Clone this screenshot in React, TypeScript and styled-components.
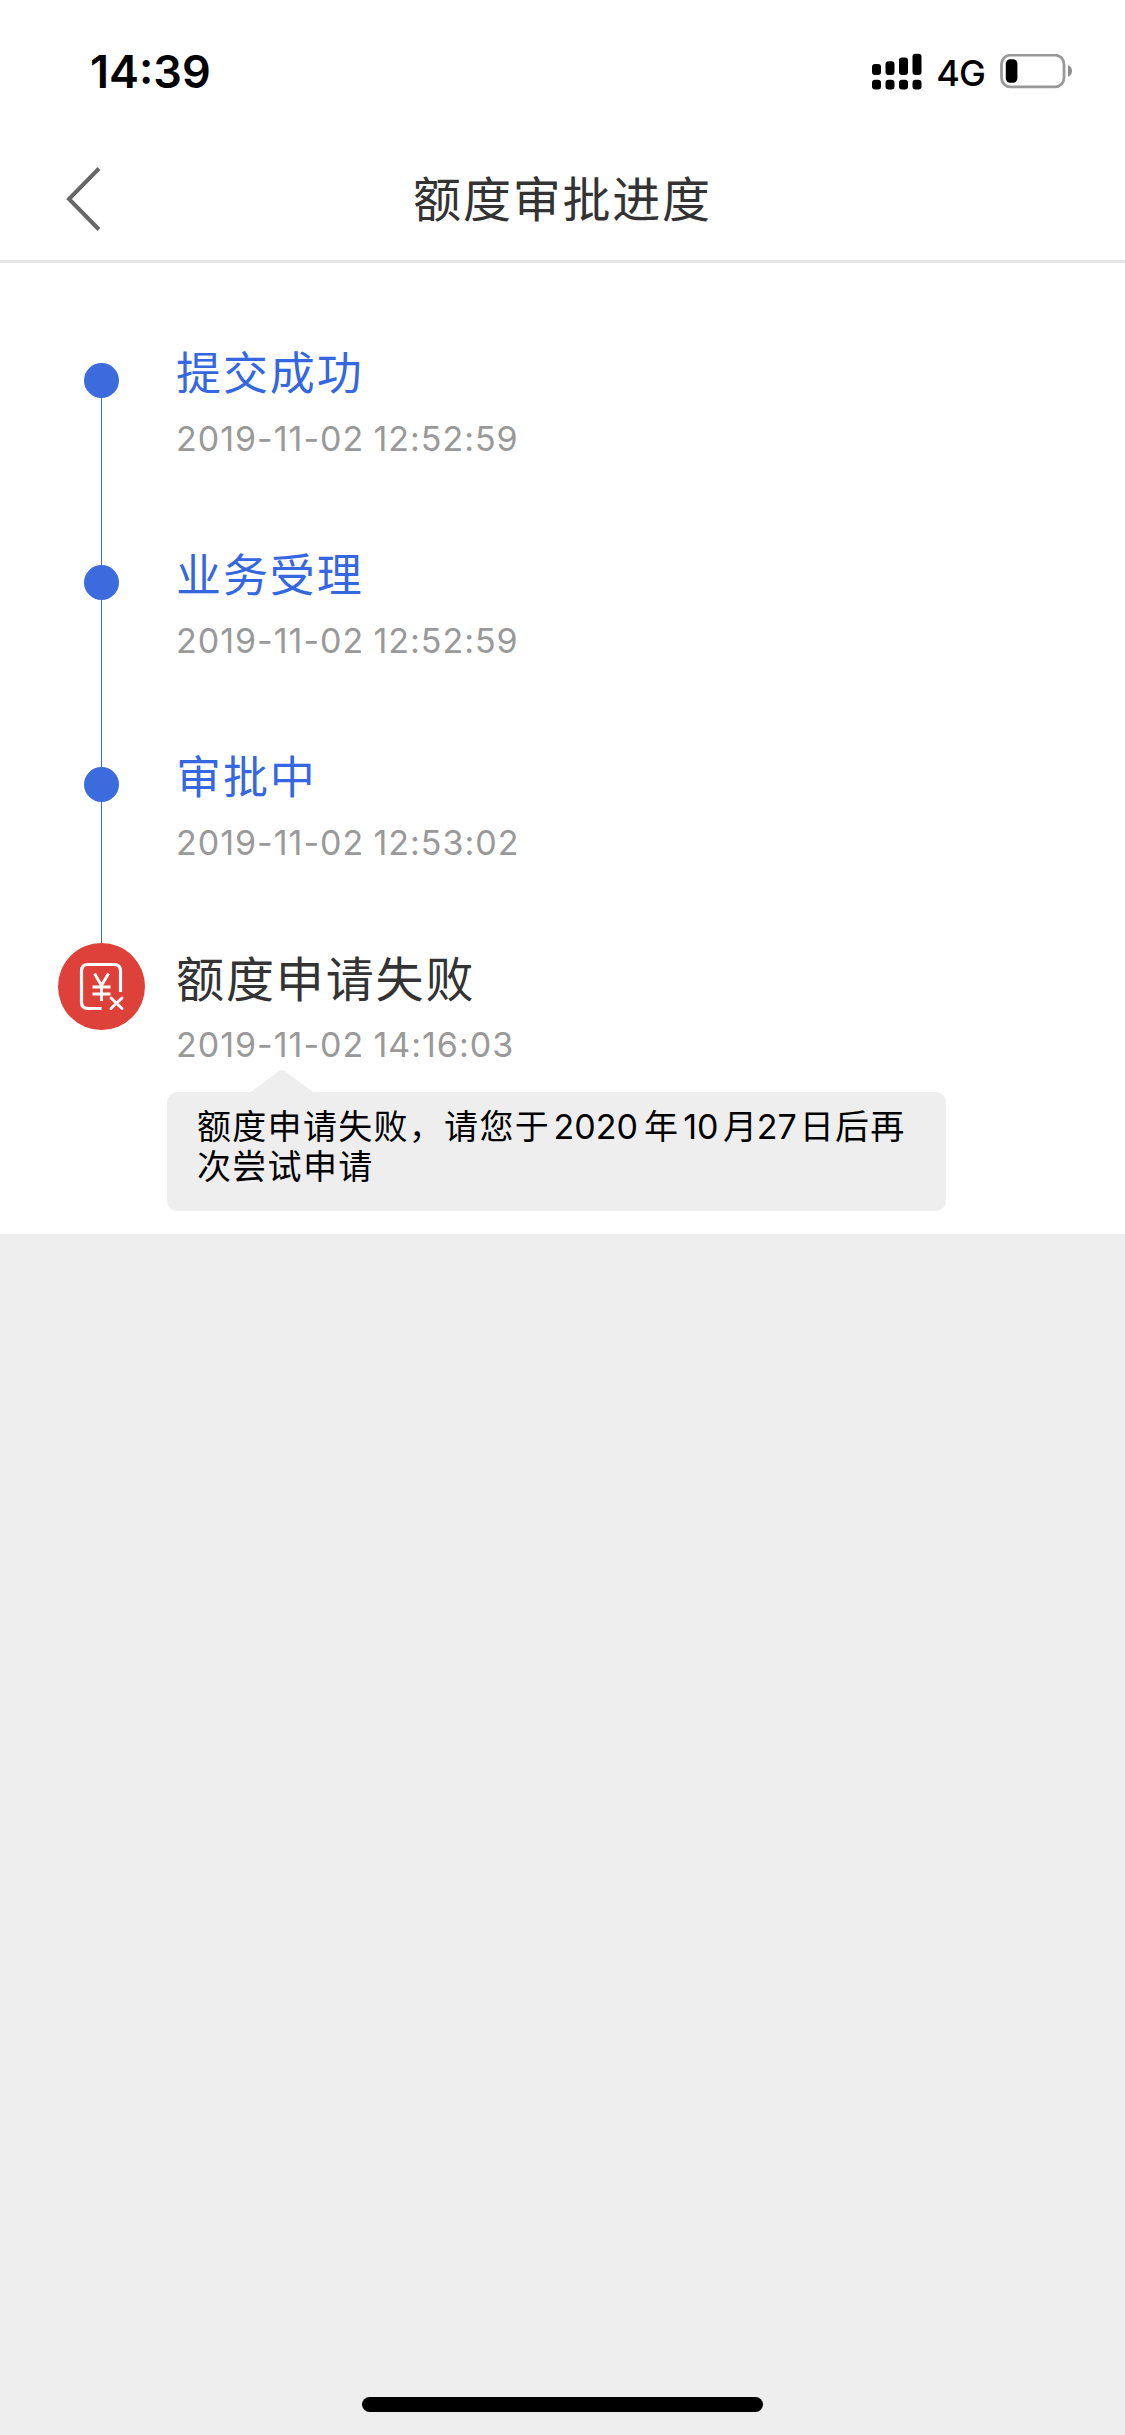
import React from "react";
import styled, { createGlobalStyle } from "styled-components";

const GlobalStyle = createGlobalStyle`
  * { box-sizing: border-box; }
  body { margin: 0; background: #eee; }
`;

const Screen = styled.div`
  display: flex;
  flex-direction: column;
  width: 1125px;
  height: 2435px;
  background: #eee;
  font-family: Inter, "Noto Sans CJK SC", sans-serif;
  overflow: hidden;
`;

const StatusBar = styled.header`
  display: flex;
  align-items: center;
  justify-content: space-between;
  height: 132px;
  padding: 12px 52px 0 90px;
  background: #fff;
  color: #000;
`;

const Clock = styled.span`
  font-size: 45px;
  line-height: 54px;
  font-weight: 600;
`;

const Indicators = styled.div`
  display: flex;
  align-items: center;
`;

const Network = styled.span`
  margin: 1px 15px 0 14px;
  font-size: 36px;
  line-height: 42px;
  font-weight: 500;
  letter-spacing: -0.9px;
`;

const NavBar = styled.nav`
  display: grid;
  grid-template-columns: 110px 1fr 110px;
  align-items: center;
  height: 131px;
  padding-top: 3px;
  background: #fff;
  border-bottom: 3px solid #e5e5e5;
`;

const BackButton = styled.button`
  display: flex;
  padding: 2px 0 0 64px;
  border: 0;
  background: none;
`;

const Title = styled.h1`
  margin: 0;
  padding: 4px 0 0 0;
  color: #333;
  font-size: 48px;
  line-height: 60px;
  font-weight: 400;
  letter-spacing: 1.8px;
  text-align: center;
`;

const Panel = styled.main`
  height: 971px;
  padding: 74px 0 0 57px;
  background: #fff;
`;

const Steps = styled.ol`
  margin: 0;
  padding: 0;
  list-style: none;
`;

const Step = styled.li`
  display: grid;
  grid-template-columns: 89px 1fr;
  column-gap: 30px;
  height: 202px;
`;

const Rail = styled.div`
  display: flex;
  flex-direction: column;
  align-items: center;
`;

const Connector = styled.i<{ $hidden?: boolean; $grow?: boolean }>`
  width: 1px;
  height: 26px;
  flex: ${(p) => (p.$grow ? "1" : "0 0 26px")};
  background: ${(p) => (p.$hidden ? "transparent" : "#3b6bdb")};
`;

const Dot = styled.i`
  flex: none;
  width: 35px;
  height: 35px;
  border-radius: 50%;
  background: #3b6bdd;
`;

const Failure = styled.div`
  display: flex;
  flex: none;
  width: 87px;
  height: 87px;
  border-radius: 50%;
  background: #dd4139;
`;

const Body = styled.div`
  padding-top: 4.5px;
`;

const StepName = styled.h2<{ $failed?: boolean }>`
  margin: 0;
  color: ${(p) => (p.$failed ? "#333" : "#3567e0")};
  font-size: ${(p) => (p.$failed ? 48 : 45)}px;
  font-weight: 400;
  line-height: 64px;
  letter-spacing: 1.9px;
`;

const Time = styled.time`
  display: block;
  margin-top: 12.5px;
  color: #999;
  font-size: 34px;
  line-height: 42px;
  letter-spacing: 1px;
  word-spacing: -1.4px;
`;

const Pointer = styled.svg`
  display: block;
  margin: 3px 0 0 75px;
`;

const Bubble = styled.div`
  width: 779px;
  height: 119px;
  margin-left: -9px;
  padding: 15px 30px;
  border-radius: 10px;
  background: #eee;
  color: #000;
  font-size: 34px;
  line-height: 40px;
  letter-spacing: 1.3px;
`;

const Line = styled.div`
  white-space: nowrap;
`;

const Num = styled.span<{ $before: number; $after: number }>`
  margin: 0 ${(p) => p.$after}px 0 ${(p) => p.$before}px;
  letter-spacing: 0;
`;

const HomeArea = styled.footer`
  display: flex;
  justify-content: center;
  margin-top: auto;
  padding-bottom: 23px;
`;

const HomeIndicator = styled.i`
  width: 401px;
  height: 15px;
  border-radius: 8px;
  background: #000;
`;

const steps = [
  { name: "提交成功", time: "2019-11-02 12:52:59" },
  { name: "业务受理", time: "2019-11-02 12:52:59" },
  { name: "审批中", time: "2019-11-02 12:53:02" },
];

const SignalIcon = () => (
  <svg width="50" height="38" viewBox="0 0 50 38">
    <rect x="0" y="11" width="9" height="11" rx="3" />
    <rect x="13.5" y="8.3" width="9" height="13.7" rx="3" />
    <rect x="27" y="4.6" width="9" height="17.4" rx="3" />
    <rect x="40.5" y="0.8" width="9" height="21.2" rx="3" />
    {[0, 13.5, 27, 40.5].map((x) => (
      <rect key={x} x={x} y="26.8" width="9" height="9.6" rx="3.2" />
    ))}
  </svg>
);

const BatteryIcon = () => (
  <svg width="73" height="36" viewBox="0 0 73 36">
    <rect x="1.5" y="1.2" width="62.5" height="31.6" rx="9" fill="none" stroke="#999" strokeWidth="2.8" />
    <rect x="5.8" y="5.2" width="11.6" height="23.6" rx="4.5" />
    <path d="M68 11.3 Q72 13 72 17 Q72 21 68 22.7Z" fill="#8c8c8c" />
  </svg>
);

const FailureIcon = () => (
  <svg width="87" height="87" viewBox="0 0 87 87" fill="none" stroke="#fff" strokeWidth="3.2">
    <path d="M62.500 49V28q0-6.500-6.500-6.500H30q-6.500 0-6.500 6.500V59q0 6.500 6.500 6.500H43.500" />
    <path d="M36.500 30.500 43.500 42.500 50.500 30.500M43.500 42.500V58M34.500 44H52.500M34.500 51H52.500" strokeWidth="2.900" />
    <path d="M53 55 64 65.500M64 55 53 65.500" strokeLinecap="round" strokeWidth="2.900" />
  </svg>
);

export default function App() {
  return (
    <>
      <GlobalStyle />
      <Screen>
        <StatusBar>
          <Clock>14:39</Clock>
          <Indicators>
            <SignalIcon />
            <Network>4G</Network>
            <BatteryIcon />
          </Indicators>
        </StatusBar>
        <NavBar>
          <BackButton aria-label="返回">
            <svg width="38" height="66" viewBox="0 0 38 66" fill="none" stroke="#666" strokeWidth="4">
              <path d="M35 2.500 5 33 35 63.500" />
            </svg>
          </BackButton>
          <Title>额度审批进度</Title>
        </NavBar>
        <Panel>
          <Steps>
            {steps.map((s, i) => (
              <Step key={s.name}>
                <Rail>
                  <Connector $hidden={i === 0} />
                  <Dot />
                  <Connector $grow />
                </Rail>
                <Body>
                  <StepName>{s.name}</StepName>
                  <Time>{s.time}</Time>
                </Body>
              </Step>
            ))}
            <Step>
              <Rail>
                <Failure>
                  <FailureIcon />
                </Failure>
              </Rail>
              <Body>
                <StepName $failed>额度申请失败</StepName>
                <Time>2019-11-02 14:16:03</Time>
                <Pointer width="62" height="23" viewBox="0 0 62 23">
                  <path d="M0 23 28 2Q31 0 34 2L62 23Z" fill="#eee" />
                </Pointer>
                <Bubble>
                  <Line>
                    额度申请失败，请您于
                    <Num $before={3.5} $after={6}>2020</Num>年
                    <Num $before={4} $after={4.5}>10</Num>月
                    <Num $before={-1.5} $after={3}>27</Num>日后再
                  </Line>
                  <Line>次尝试申请</Line>
                </Bubble>
              </Body>
            </Step>
          </Steps>
        </Panel>
        <HomeArea>
          <HomeIndicator />
        </HomeArea>
      </Screen>
    </>
  );
}
